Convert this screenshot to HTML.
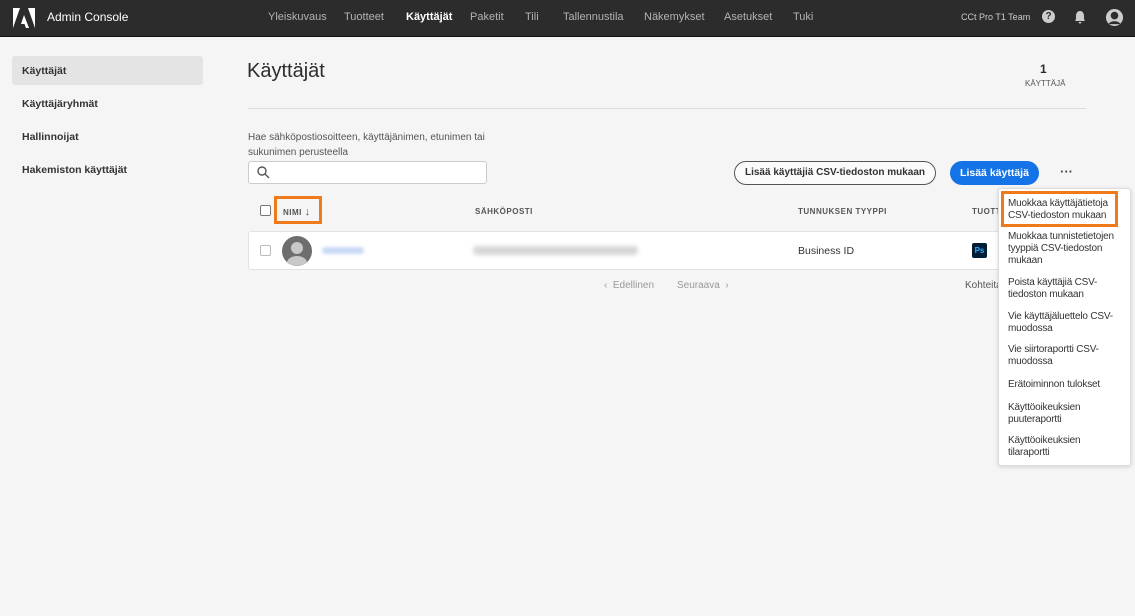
<!DOCTYPE html>
<html><head><meta charset="utf-8"><style>
*{box-sizing:border-box;margin:0;padding:0}
body{width:1135px;height:616px;background:#f5f5f5;font-family:"Liberation Sans",sans-serif;position:relative;overflow:hidden;color:#2c2c2c}
.a{position:absolute;white-space:nowrap}
#hdr{position:absolute;left:0;top:0;width:1135px;height:37px;background:#2c2c2c;border-bottom:1px solid #111}
.nav{color:#b3b3b3;font-size:11px;top:11px}
.side{font-size:10.5px;font-weight:bold;color:#333;left:22px}
.th{font-size:8px;font-weight:bold;color:#555;letter-spacing:.5px}
.mi{font-size:10px;color:#333;left:1008px;line-height:12px;letter-spacing:-.2px}
</style></head><body>
<div id="hdr"></div>
<svg class="a" style="left:13px;top:8px" width="22" height="20" viewBox="0 0 22 20"><path d="M0 0h7L0 20z M15 0h7v20z M11 7l5 13h-3l-1.5-4H8z" fill="#fff"/></svg>
<div class="a" style="left:47px;top:10px;color:#fff;font-size:12px">Admin Console</div>
<div class="a nav" style="left:268px">Yleiskuvaus</div>
<div class="a nav" style="left:344px">Tuotteet</div>
<div class="a nav" style="left:406px;color:#fff;font-weight:bold">Käyttäjät</div>
<div class="a nav" style="left:470px">Paketit</div>
<div class="a nav" style="left:525px">Tili</div>
<div class="a nav" style="left:563px">Tallennustila</div>
<div class="a nav" style="left:644px">Näkemykset</div>
<div class="a nav" style="left:724px">Asetukset</div>
<div class="a nav" style="left:793px">Tuki</div>
<div class="a" style="left:961px;top:12px;color:#ccc;font-size:9px">CCt Pro T1 Team</div>
<div class="a" style="left:1042px;top:10px;width:13px;height:13px;border-radius:50%;background:#ccc;color:#2c2c2c;font-size:10px;font-weight:bold;text-align:center;line-height:13px">?</div>
<svg class="a" style="left:1074px;top:10px" width="12" height="14" viewBox="0 0 12 14"><path d="M6 1c-3 0-4 3-4 5v3L1 11h10L10 9V6c0-2-1-5-4-5zM4.5 12a1.5 1.5 0 003 0z" fill="#ccc"/></svg>
<svg class="a" style="left:1105px;top:8px" width="19" height="19" viewBox="0 0 20 20"><circle cx="10" cy="10" r="9" fill="#ccc"/><circle cx="10" cy="8" r="4" fill="#2c2c2c"/><path d="M4 17c1-4 11-4 12 0z" fill="#2c2c2c"/></svg>

<div class="a" style="left:12px;top:56px;width:191px;height:29px;background:#e4e4e4;border-radius:3px"></div>
<div class="a side" style="top:65px">Käyttäjät</div>
<div class="a side" style="top:98px">Käyttäjäryhmät</div>
<div class="a side" style="top:131px">Hallinnoijat</div>
<div class="a side" style="top:164px">Hakemiston käyttäjät</div>

<div class="a" style="left:247px;top:60px;font-size:20px;color:#2c2c2c">Käyttäjät</div>
<div class="a" style="left:1040px;top:62px;font-size:12px;font-weight:bold">1</div>
<div class="a" style="left:1025px;top:79px;font-size:8px;color:#555">KÄYTTÄJÄ</div>
<div class="a" style="left:248px;top:108px;width:838px;height:1px;background:#ddd"></div>
<div class="a" style="left:248px;top:130px;font-size:10px;color:#555;line-height:15px;white-space:normal;width:260px">Hae sähköpostiosoitteen, käyttäjänimen, etunimen tai sukunimen perusteella</div>
<div class="a" style="left:248px;top:161px;width:239px;height:23px;background:#fff;border:1px solid #ccc;border-radius:3px"></div>
<svg class="a" style="left:257px;top:166px" width="13" height="13" viewBox="0 0 13 13"><circle cx="5" cy="5" r="4" fill="none" stroke="#555" stroke-width="1.4"/><path d="M8 8l4 4" stroke="#555" stroke-width="1.4"/></svg>
<div class="a" style="left:734px;top:161px;width:202px;height:24px;border:1.5px solid #555;border-radius:12px;font-size:10px;font-weight:bold;text-align:center;line-height:21px;color:#333;background:#fafafa">Lisää käyttäjiä CSV-tiedoston mukaan</div>
<div class="a" style="left:950px;top:161px;width:89px;height:24px;background:#1473e6;border-radius:12px;color:#fff;font-size:10.5px;font-weight:bold;text-align:center;line-height:24px">Lisää käyttäjä</div>
<div class="a" style="left:1060px;top:164px;font-size:13px;font-weight:bold;color:#444">···</div>

<div class="a" style="left:260px;top:205px;width:11px;height:11px;border:1.5px solid #777;border-radius:2px;background:#fff"></div>
<div class="a" style="left:274px;top:196px;width:48px;height:28px;border:3px solid #f07a1a"></div>
<div class="a th" style="left:283px;top:206px">NIMI <span style="font-size:11px">↓</span></div>
<div class="a th" style="left:475px;top:207px">SÄHKÖPOSTI</div>
<div class="a th" style="left:798px;top:207px">TUNNUKSEN TYYPPI</div>
<div class="a th" style="left:972px;top:207px">TUOTT</div>

<div class="a" style="left:248px;top:231px;width:760px;height:39px;background:#fff;border:1px solid #e2e2e2;border-radius:3px"></div>
<div class="a" style="left:260px;top:245px;width:11px;height:11px;border:1px solid #bbb;border-radius:2px"></div>
<svg class="a" style="left:282px;top:236px" width="30" height="30" viewBox="0 0 30 30"><circle cx="15" cy="15" r="15" fill="#6e6e6e"/><circle cx="15" cy="12" r="6" fill="#c8c8c8"/><path d="M5 26c2-8 18-8 20 0a15 15 0 01-20 0z" fill="#c8c8c8"/></svg>
<div class="a" style="left:322px;top:247px;width:42px;height:7px;background:#c9d9f5;border-radius:4px;filter:blur(1.5px)"></div>
<div class="a" style="left:473px;top:246px;width:165px;height:9px;background:#d6d6d6;border-radius:4px;filter:blur(2px)"></div>
<div class="a" style="left:798px;top:245px;font-size:10.5px;color:#333">Business ID</div>
<div class="a" style="left:972px;top:243px;width:15px;height:15px;background:#001e36;border-radius:2px;color:#31a8ff;font-size:8px;font-weight:bold;text-align:center;line-height:15px">Ps</div>

<div class="a" style="left:604px;top:280px;font-size:10px;color:#999">‹ &nbsp;Edellinen</div>
<div class="a" style="left:677px;top:280px;font-size:10px;color:#999">Seuraava &nbsp;›</div>
<div class="a" style="left:965px;top:280px;font-size:10px;color:#555">Kohteita</div>

<div class="a" style="left:998px;top:188px;width:133px;height:278px;background:#fff;border:1px solid #ddd;border-radius:3px;box-shadow:0 1px 4px rgba(0,0,0,.15)"></div>
<div class="a" style="left:1001px;top:191px;width:117px;height:36px;border:3px solid #f07a1a"></div>
<div class="a mi" style="top:198px">Muokkaa käyttäjätietoja<br>CSV-tiedoston mukaan</div>
<div class="a mi" style="top:231px">Muokkaa tunnistetietojen<br>tyyppiä CSV-tiedoston<br>mukaan</div>
<div class="a mi" style="top:277px">Poista käyttäjiä CSV-<br>tiedoston mukaan</div>
<div class="a mi" style="top:311px">Vie käyttäjäluettelo CSV-<br>muodossa</div>
<div class="a mi" style="top:344px">Vie siirtoraportti CSV-<br>muodossa</div>
<div class="a mi" style="top:379px">Erätoiminnon tulokset</div>
<div class="a mi" style="top:402px">Käyttöoikeuksien<br>puuteraportti</div>
<div class="a mi" style="top:435px">Käyttöoikeuksien<br>tilaraportti</div>
</body></html>
